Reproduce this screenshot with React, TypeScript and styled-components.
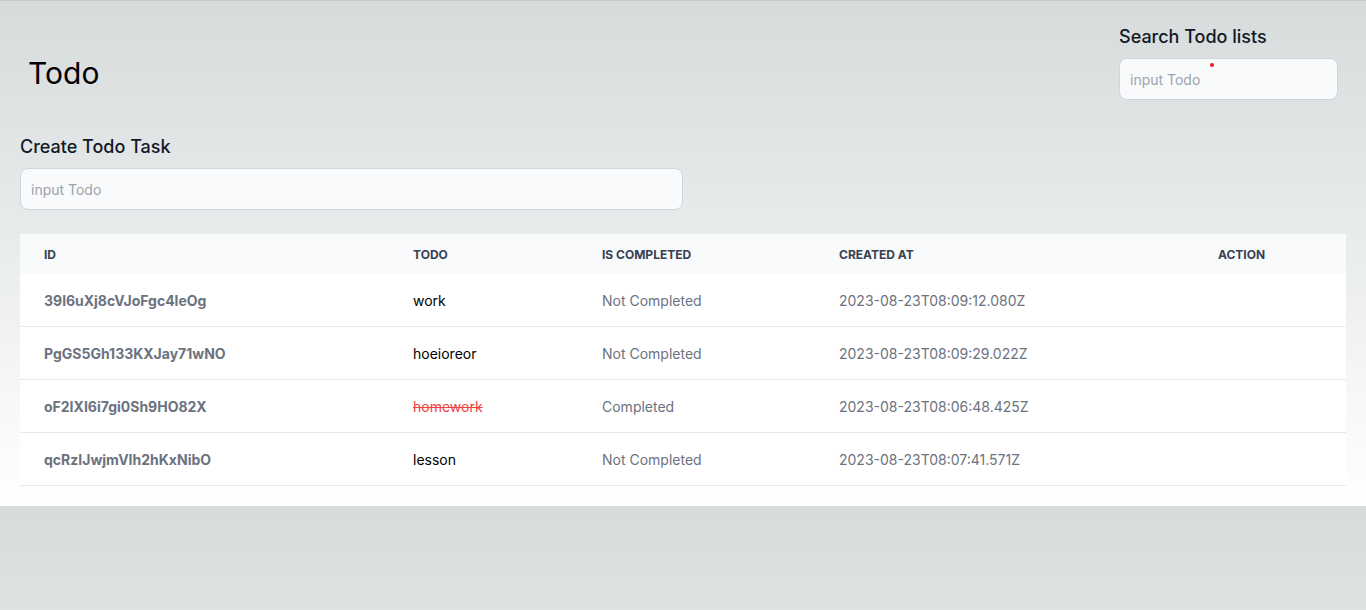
import styled, { createGlobalStyle } from "styled-components";

type Todo = {
  id: string;
  todo: string;
  completed: boolean;
  createdAt: string;
};

const TODOS: Todo[] = [
  { id: "39l6uXj8cVJoFgc4leOg", todo: "work", completed: false, createdAt: "2023-08-23T08:09:12.080Z" },
  { id: "PgGS5Gh133KXJay71wNO", todo: "hoeioreor", completed: false, createdAt: "2023-08-23T08:09:29.022Z" },
  { id: "oF2IXI6i7gi0Sh9HO82X", todo: "homework", completed: true, createdAt: "2023-08-23T08:06:48.425Z" },
  { id: "qcRzIJwjmVIh2hKxNibO", todo: "lesson", completed: false, createdAt: "2023-08-23T08:07:41.571Z" },
];

export default function App() {
  return (
    <>
      <GlobalStyle />
      <SCPage>
        <SCHeader>
          <SCTitle>Todo</SCTitle>
          <SCSearch>
            <SCLabel>Search Todo lists</SCLabel>
            <SCInputWrap>
              <SCInput $width="219px" placeholder="input Todo" />
              <SCDot />
            </SCInputWrap>
          </SCSearch>
        </SCHeader>

        <SCCreate>
          <SCLabel>Create Todo Task</SCLabel>
          <SCInput $width="663px" placeholder="input Todo" />
        </SCCreate>

        <SCTable>
          <colgroup>
            <col style={{ width: 369 }} />
            <col style={{ width: 189 }} />
            <col style={{ width: 237 }} />
            <col style={{ width: 379 }} />
            <col style={{ width: 152 }} />
          </colgroup>
          <thead>
            <tr>
              <th>ID</th>
              <th>Todo</th>
              <th>Is Completed</th>
              <th>Created At</th>
              <th>Action</th>
            </tr>
          </thead>
          <tbody>
            {TODOS.map((t) => (
              <tr key={t.id}>
                <SCIdCell>{t.id}</SCIdCell>
                <SCTodoCell $done={t.completed}>{t.todo}</SCTodoCell>
                <td>{t.completed ? "Completed" : "Not Completed"}</td>
                <td>{t.createdAt}</td>
                <td></td>
              </tr>
            ))}
          </tbody>
        </SCTable>
      </SCPage>
    </>
  );
}

const GlobalStyle = createGlobalStyle`
  body {
    margin: 0;
    font-family: Inter, "Noto Sans", sans-serif;
    background: linear-gradient(to bottom, #d6dbdb, #ffffff);
    color: #111827;
  }
  * {
    box-sizing: border-box;
  }
`;

const SCPage = styled.div`
  border-top: 1px solid #c7cbcb;
  padding: 0 20px 20px;
`;

const SCHeader = styled.div`
  display: flex;
  justify-content: space-between;
  align-items: flex-start;
  padding: 22px 8px 0 8px;
`;

const SCTitle = styled.h1`
  margin: 32px 0 0;
  font-size: 30px;
  line-height: 36px;
  font-weight: 400;
  color: #000;
`;

const SCSearch = styled.div`
  display: flex;
  flex-direction: column;
`;

const SCLabel = styled.label`
  display: block;
  font-size: 18px;
  line-height: 28px;
  font-weight: 500;
  color: #111827;
  margin-bottom: 7px;
`;

const SCInputWrap = styled.div`
  position: relative;
`;

const SCDot = styled.span`
  position: absolute;
  left: 91px;
  top: 5px;
  width: 4px;
  height: 4px;
  border-radius: 50%;
  background: #ef1c1c;
`;

const SCInput = styled.input<{ $width: string }>`
  display: block;
  width: ${(p) => p.$width};
  height: 42px;
  padding: 10px;
  font-family: Inter, sans-serif;
  font-size: 14px;
  line-height: 20px;
  color: #111827;
  background: #f9fafb;
  border: 1px solid #d1d5db;
  border-radius: 8px;
  outline: none;

  &::placeholder {
    color: #9ca3af;
  }
`;

const SCCreate = styled.div`
  margin-top: 33px;
`;

const SCTable = styled.table`
  margin-top: 24px;
  width: 100%;
  table-layout: fixed;
  border-collapse: collapse;
  background: #ffffff;
  font-size: 14px;
  line-height: 20px;
  text-align: left;
  color: #6b7280;

  th {
    padding: 13px 24px 11px;
    background: #f9fafb;
    font-size: 12px;
    line-height: 16px;
    font-weight: 700;
    text-transform: uppercase;
    color: #374151;
  }

  td {
    padding: 17px 24px 15px;
    white-space: nowrap;
  }

  tbody tr {
    border-bottom: 1px solid #e5e7eb;
  }
`;

const SCIdCell = styled.td`
  font-weight: 700;
  color: #6b7280;
`;

const SCTodoCell = styled.td<{ $done: boolean }>`
  color: ${(p) => (p.$done ? "#ef4444" : "#000000")};
  text-decoration: ${(p) => (p.$done ? "line-through" : "none")};
`;
